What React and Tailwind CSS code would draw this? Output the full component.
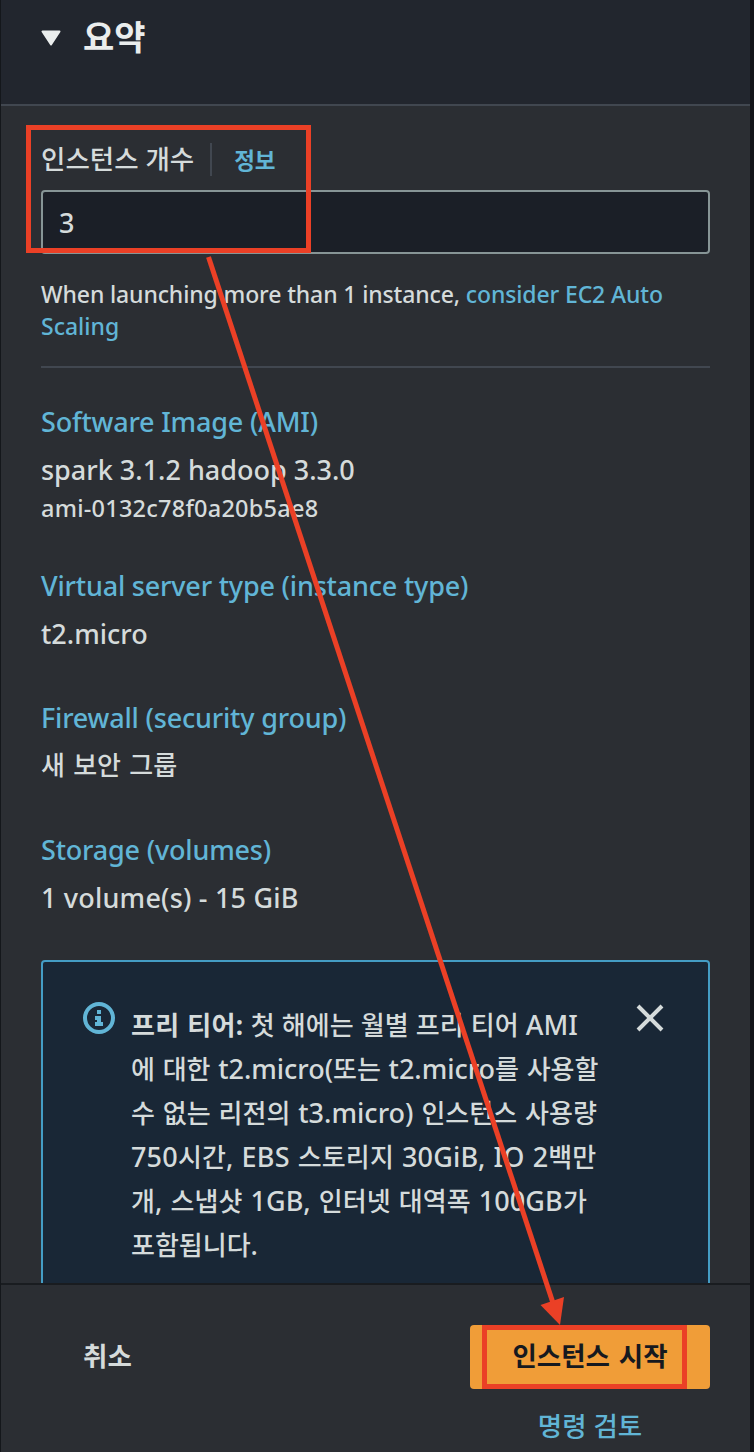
import React from "react";

const link = "text-[#61b5d6]";

// Latin runs are set slightly larger than the Hangul around them.
function Mixed({ text }) {
  return text.split(/([!-~]+)/).map((part, i) =>
    i % 2 ? (
      <span key={i} className="text-[27px] leading-none">
        {part}
      </span>
    ) : (
      part
    )
  );
}

function Section({ title, children }) {
  return (
    <section className="h-[132px]">
      <h3 className={`h-[48px] text-[27px] font-medium leading-[36px] tracking-[-0.19px] ${link}`}>{title}</h3>
      {children}
    </section>
  );
}

const notice = [
  { text: "에 대한 t2.micro(또는 t2.micro를 사용할", spacing: "tracking-[-0.02px]" },
  { text: "수 없는 리전의 t3.micro) 인스턴스 사용량", spacing: "tracking-[0.04px]" },
  { text: "750시간, EBS 스토리지 30GiB, IO 2백만", spacing: "tracking-[0.18px]" },
  { text: "개, 스냅샷 1GB, 인터넷 대역폭 100GB가", spacing: "tracking-[0.12px]" },
  { text: "포함됩니다.", spacing: "tracking-normal" },
];

export default function App() {
  return (
    <div className="relative flex h-[1452px] w-[754px] flex-col overflow-hidden whitespace-nowrap border-l border-r-4 border-l-[#14171b] border-r-[#121519] bg-[#2b2e33] font-['Noto_Sans','Noto_Sans_CJK_KR',sans-serif] font-medium text-[#d5dbdb]">
      <header className="flex h-[106px] shrink-0 items-start border-b-2 border-[#414750] bg-[#22262e] pl-10 text-[#eaeded]">
        <svg className="mt-[30px] h-[16px] w-[20px]" viewBox="0 0 20 16">
          <path d="M1.5 1.5h17L10 14.5z" fill="currentColor" stroke="currentColor" strokeWidth="2" strokeLinejoin="round" />
        </svg>
        <h2 className="ml-[22px] mt-[13px] text-[34px] font-bold leading-[48px]">요약</h2>
      </header>

      <main className="flex h-[1177px] shrink-0 flex-col overflow-hidden px-10 pt-[36px]">
        <div className="flex h-[34px] items-center">
          <span className="pt-[2px] text-[26.5px]">인스턴스 개수</span>
          <span className="ml-[16px] h-[33px] w-[2px] bg-[#414750]" />
          <a className={`ml-[22px] pt-[4px] text-[22.5px] font-bold ${link}`}>정보</a>
        </div>
        <div className="mt-[14px] flex h-[64px] shrink-0 items-center rounded-[4px] border-2 border-[#879596] bg-[#1b1f27] px-[16px] pt-[2px] text-[27px]">3</div>
        <p className="mt-[24px] text-[23px] leading-[32px] tracking-[-0.13px]">
          When launching more than 1 instance, <a className={link}>consider EC2 Auto<br /><span className="tracking-normal">Scaling</span></a>
        </p>
        <hr className="mt-[24px] h-[2px] shrink-0 border-0 bg-[#414750]" />

        <div className="mt-[36px] h-[556px] shrink-0">
          <div className="h-[164px]">
            <Section title="Software Image (AMI)">
              <div className="text-[27px] leading-[36px]">spark 3.1.2 hadoop 3.3.0</div>
              <div className="mt-[4px] text-[23.5px] leading-[32px] tracking-[0.24px]">ami-0132c78f0a20b5ae8</div>
            </Section>
          </div>
          <Section title="Virtual server type (instance type)">
            <div className="text-[27px] leading-[36px]">t2.micro</div>
          </Section>
          <Section title="Firewall (security group)">
            <div className="-mt-px text-[26px] leading-[36px] [word-spacing:1.5px]">새 보안 그룹</div>
          </Section>
          <Section title="Storage (volumes)">
            <div className="text-[27px] leading-[36px] tracking-[0.2px]">1 volume(s) - 15 GiB</div>
          </Section>
        </div>

        <aside className="flex h-[340px] shrink-0 rounded-[4px] border-2 border-[#449dc5] bg-[#192736] pl-10 pr-[44px]">
          <svg className={`mt-[40px] h-8 w-8 ${link}`} viewBox="0 0 32 32" fill="none">
            <circle cx="16" cy="16" r="14" stroke="currentColor" strokeWidth="4" />
            <path d="M14 8h4v4h-4zM12 14h6v6h2v4h-8v-4h2v-2h-2z" fill="currentColor" />
          </svg>
          <div className="ml-4 mt-[41px] flex-1 text-[26px] leading-[44px] [word-spacing:1px]">
            <div className="[word-spacing:0.4px]"><b className="font-bold tracking-[0.4px]">프리 티어:</b> <Mixed text="첫 해에는 월별 프리 티어 AMI" /></div>
            {notice.map(({ text, spacing }) => <div key={text} className={spacing}><Mixed text={text} /></div>)}
          </div>
          <svg className="mt-[42px] h-[28px] w-[28px]" viewBox="0 0 28 28">
            <path d="M2 2l24 24M26 2L2 26" stroke="currentColor" strokeWidth="4" />
          </svg>
        </aside>
      </main>

      <footer className="flex min-h-0 flex-1 items-start justify-between border-t-2 border-[#191c20] pl-[82px] pr-10 pt-[40px]">
        <button className="h-[64px] text-[26.5px] font-bold">취소</button>
        <div className="flex w-[240px] flex-col items-center">
          <button className="h-[64px] w-[240px] rounded-[4px] bg-[#f09d38] text-[26.5px] font-bold text-[#16191f] [word-spacing:2px]">인스턴스 시작</button>
          <a className={`mt-[17px] text-[26.5px] leading-[40px] ${link}`}>명령 검토</a>
        </div>
      </footer>

      <svg className="pointer-events-none absolute -left-px top-0 h-[1452px] w-[754px]" viewBox="0 0 754 1452" fill="none">
        <rect x="28.5" y="127.5" width="280" height="123" stroke="#eb4026" strokeWidth="5" />
        <rect x="484.5" y="1327.5" width="200" height="59" stroke="#eb4026" strokeWidth="5" />
        <path d="M208.5 257L553 1303" stroke="#eb4026" strokeWidth="5" />
        <path d="M540.5 1305L564 1297L560 1325z" fill="#eb4026" />
      </svg>
    </div>
  );
}
